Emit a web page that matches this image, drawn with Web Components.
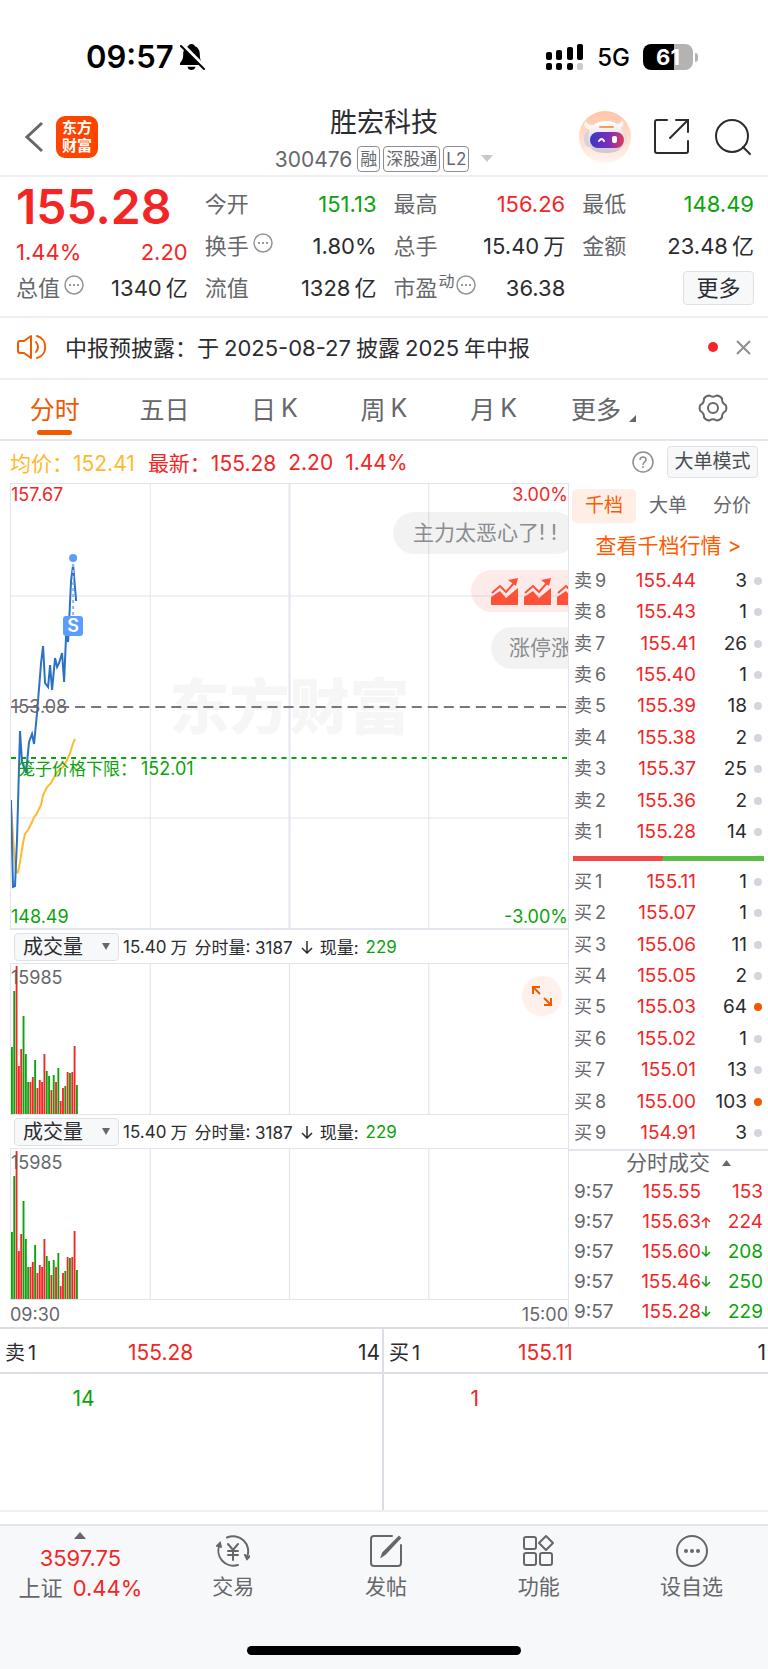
<!DOCTYPE html>
<html lang="zh-CN">
<head>
<meta charset="utf-8">
<meta name="viewport" content="width=device-width, initial-scale=1">
<title>胜宏科技 300476</title>
<style>
    body {
        margin: 0;
        background: #fff;
        color: #2b2c30;
        font-family: Inter, "Noto Sans CJK SC", sans-serif;
        font-size: 20px;
        --up: #f32626;
        --down: #0ba30b;
        --brand: #f05a00;
        --muted: #66676b;
        --line: #e3e5ec;
        --soft: #f0f0f2;
        --panel: #f7f8fa;
    }
</style>
</head>
<body>
<stock-page></stock-page>

<script>
const BASE = `
    * { box-sizing: border-box; }
    :host { display: block; }
    button, select {
        font: inherit;
        color: inherit;
        background: none;
        border: 0;
        margin: 0;
        padding: 0;
    }
    a { color: inherit; text-decoration: none; }
    svg { display: block; fill: none; }
    .up { color: var(--up); }
    .down { color: var(--down); }
`;

class BaseElement extends HTMLElement {
    constructor() {
        super();
        this.attachShadow({ mode: 'open' });
    }

    connectedCallback() {
        this.shadowRoot.innerHTML = `<style>${BASE}${this.styles()}</style>${this.template()}`;
    }

    styles() { return ''; }
    template() { return '<slot></slot>'; }
}

class StatusBar extends BaseElement {
    styles() {
        return `
            :host {
                display: flex;
                align-items: center;
                justify-content: space-between;
                padding: 40px 70px 24px 86px;
                height: 98px;
                color: #000;
            }
            .side { display: flex; align-items: center; }
            .time { font-size: 31px; font-weight: 600; line-height: 34px; margin-right: 5px; }
            .net { font-size: 24px; font-weight: 500; margin: 0 13px 0 13px; }
            .battery {
                width: 50px;
                height: 26px;
                border-radius: 8px;
                background: linear-gradient(90deg, #000 61%, #b3b3b3 61%);
                color: #fff;
                font-size: 22px;
                font-weight: 700;
                line-height: 26px;
                text-align: center;
            }
            .nub { width: 3px; height: 9px; margin-left: 2px; border-radius: 0 3px 3px 0; background: #b3b3b3; }
        `;
    }

    template() {
        return `
            <div class="side">
                <span class="time">09:57</span>
                <svg width="26" height="28" viewBox="0 0 26 28">
                    <path fill="#000" d="M12.500 1C10.500 1 9.500 2 9.200 3.200C5.500 4.500 4.200 7.500 4.200 11.500C4.200 16 2.800 18 1 20V22H23.500V20C21.800 18 20.800 16 20.800 11.500C20.800 7.500 19.500 4.500 15.800 3.200C15.500 2 14.500 1 12.500 1ZM8.500 23.800H16.500C16 26 14.500 27 12.500 27S9 26 8.500 23.800Z"/>
                    <path stroke="#fff" stroke-width="4" d="M3 1.500L26 24.500"/>
                    <path stroke="#000" stroke-width="2" stroke-linecap="round" d="M2 3L25 26"/>
                </svg>
            </div>
            <div class="side">
                <svg width="39" height="28" viewBox="0 0 39 28">
                    <g fill="#000">
                        <rect x="1" y="9" width="6" height="8" rx="2"/>
                        <rect x="11" y="7" width="6" height="10" rx="2"/>
                        <rect x="22" y="4" width="6" height="13" rx="2"/>
                        <rect x="32" y="1" width="6" height="16" rx="2"/>
                        <rect x="1" y="20" width="6" height="7" rx="2"/>
                        <rect x="11" y="20" width="6" height="7" rx="2"/>
                        <rect x="22" y="20" width="6" height="7" rx="2"/>
                    </g>
                    <rect x="32" y="20" width="6" height="7" rx="2" fill="#ccc"/>
                </svg>
                <span class="net">5G</span>
                <span class="battery">61</span>
                <span class="nub"></span>
            </div>
        `;
    }
}

class StockHeader extends BaseElement {
    styles() {
        return `
            :host {
                display: grid;
                grid-template-columns: 1fr auto 1fr;
                align-items: center;
                height: 79px;
                padding: 0 16px;
                border-bottom: 2px solid var(--soft);
            }
            .left, .right { display: flex; align-items: center; }
            .left { padding-left: 8px; }
            .right { justify-content: flex-end; }
            .logo {
                width: 42px;
                height: 42px;
                margin-left: 12px;
                padding-top: 3px;
                border-radius: 9px;
                background: #ff4400;
                color: #fff;
                font-size: 15px;
                font-weight: 700;
                line-height: 18px;
                text-align: center;
            }
            h1 { margin: 9px 0 6px; font-size: 27px; font-weight: 400; line-height: 32px; text-align: center; }
            .sub { display: flex; align-items: center; height: 30px; gap: 3px; padding-bottom: 2px; color: var(--muted); }
            .code { margin-right: 2px; font-size: 21px; }
            .tag { height: 26px; padding: 0 2px; border: 1px solid #8d8e92; border-radius: 4px; font-size: 17px; line-height: 24px; }
            .sub svg { margin-left: 9px; }
            .robot { margin-right: 21px; }
            .share { margin-right: 24px; }
        `;
    }

    template() {
        return `
            <div class="left">
                <button aria-label="返回">
                    <svg width="20" height="32" viewBox="0 0 20 32" stroke="#66676b" stroke-width="3"><path d="M18 2L3 16L18 30"/></svg>
                </button>
                <div class="logo">东方<br>财富</div>
            </div>
            <div>
                <h1>胜宏科技</h1>
                <div class="sub">
                    <span class="code">300476</span>
                    <span class="tag">融</span><span class="tag">深股通</span><span class="tag">L2</span>
                    <svg width="12" height="8" viewBox="0 0 12 8"><path fill="#c8c8ca" d="M0 0H12L6 7Z"/></svg>
                </div>
            </div>
            <div class="right">
                <button class="robot" aria-label="助手">
                    <svg width="54" height="54" viewBox="0 0 54 54">
                        <defs>
                            <linearGradient id="halo" x1="0" y1="0" x2="0" y2="1">
                                <stop offset="0" stop-color="#ffc4a6"/><stop offset="1" stop-color="#fff5ef"/>
                            </linearGradient>
                            <linearGradient id="visor">
                                <stop offset="0" stop-color="#3a36c4"/><stop offset=".55" stop-color="#7b2fb8"/><stop offset="1" stop-color="#e23a5c"/>
                            </linearGradient>
                            <linearGradient id="shell" x1="0" y1="0" x2="0" y2="1">
                                <stop offset="0" stop-color="#fff"/><stop offset="1" stop-color="#cfc6d0"/>
                            </linearGradient>
                        </defs>
                        <circle cx="27" cy="27" r="26" fill="url(#halo)"/>
                        <path fill="#fdf3f0" d="M12 20C5 18 5 13 8 11C9 15 13 15 17 15ZM40 19C46 17 47 13 44 10C43 14 39 14 36 15Z"/>
                        <ellipse cx="11" cy="29" rx="5" ry="8" fill="#d9d2da"/>
                        <ellipse cx="45" cy="29" rx="4" ry="7" fill="#e6dfe4"/>
                        <path fill="url(#shell)" d="M28 11C39 11 46 18 46 29C46 39 40 43 28 43S10 39 10 29C10 18 17 11 28 11Z"/>
                        <rect x="21" y="16" width="15" height="2" rx="1" fill="#f0a05a"/>
                        <rect x="12" y="22" width="34" height="16" rx="8" fill="url(#visor)"/>
                        <path stroke="#fff" stroke-width="2" stroke-linecap="round" d="M21 31Q24 27 26 31"/>
                        <rect x="34" y="26" width="5" height="7" rx="2" fill="#fff"/>
                    </svg>
                </button>
                <button class="share" aria-label="分享">
                    <svg width="37" height="37" viewBox="0 0 37 37" stroke="#2b2c30" stroke-width="2" stroke-linecap="round">
                        <path d="M14 2H4Q2 2 2 4V33Q2 35 4 35H33Q35 35 35 33V23M23 2H35V14M35 2L17 20"/>
                    </svg>
                </button>
                <button aria-label="搜索">
                    <svg width="38" height="38" viewBox="0 0 38 38" stroke="#2b2c30" stroke-width="2" stroke-linecap="round">
                        <circle cx="18" cy="18" r="16"/><path d="M29 29L36 36"/>
                    </svg>
                </button>
            </div>
        `;
    }
}

const MORE_ICON = `
    <svg width="20" height="20" viewBox="0 0 20 20">
        <circle cx="10" cy="10" r="9" stroke="#949599" stroke-width="1.500"/>
        <g fill="#77787c"><circle cx="6" cy="10" r="1"/><circle cx="10" cy="10" r="1"/><circle cx="14" cy="10" r="1"/></g>
    </svg>`;

// one label / value pair; attributes: label, value, unit, trend, sup, info
class QuoteItem extends BaseElement {
    styles() {
        return `
            :host { display: flex; align-items: center; justify-content: space-between; line-height: 26px; }
            .label { display: flex; color: var(--muted); }
            sup { font-size: 16px; line-height: 12px; margin-left: 1px; }
            svg { margin-left: 4px; }
            sup + svg { margin-left: 1px; }
            .unit { margin-left: 4px; }
        `;
    }

    template() {
        const attr = (name) => this.getAttribute(name) || '';
        return `
            <span class="label">${attr('label')}${attr('sup') ? `<sup>${attr('sup')}</sup>` : ''}${this.hasAttribute('info') ? MORE_ICON : ''}</span>
            <span class="${attr('trend')}">${attr('value')}${attr('unit') ? `<span class="unit">${attr('unit')}</span>` : ''}</span>
        `;
    }
}

class QuoteBoard extends BaseElement {
    styles() {
        return `
            :host {
                display: grid;
                grid-template-columns: repeat(4, 1fr);
                gap: 17px;
                padding: 6px 14px 7px 16px;
                border-bottom: 2px solid var(--soft);
                font-size: 22px;
            }
            .col { display: grid; grid-auto-rows: 42px; }
            .price { font-size: 48px; font-weight: 600; line-height: 48px; }
            .change { display: flex; justify-content: space-between; line-height: 42px; padding-bottom: 2px; }
            .more {
                justify-self: end;
                align-self: center;
                width: 71px;
                height: 34px;
                border: 1px solid #dfe1e6;
                border-radius: 4px;
                background: var(--panel);
                line-height: 30px;
            }
        `;
    }

    template() {
        return `
            <div>
                <div class="price up">155.28</div>
                <div class="change up"><span>1.44%</span><span>2.20</span></div>
                <quote-item label="总值" info value="1340" unit="亿"></quote-item>
            </div>
            <div class="col">
                <quote-item label="今开" value="151.13" trend="down"></quote-item>
                <quote-item label="换手" info value="1.80%"></quote-item>
                <quote-item label="流值" value="1328" unit="亿"></quote-item>
            </div>
            <div class="col">
                <quote-item label="最高" value="156.26" trend="up"></quote-item>
                <quote-item label="总手" value="15.40" unit="万"></quote-item>
                <quote-item label="市盈" sup="动" info value="36.38"></quote-item>
            </div>
            <div class="col">
                <quote-item label="最低" value="148.49" trend="down"></quote-item>
                <quote-item label="金额" value="23.48" unit="亿"></quote-item>
                <button class="more">更多</button>
            </div>
        `;
    }
}

class NoticeBar extends BaseElement {
    styles() {
        return `
            :host {
                display: flex;
                align-items: center;
                height: 62px;
                padding: 0 17px 2px 17px;
                border-bottom: 2px solid var(--soft);
                font-size: 22px;
            }
            .text { flex: 1; margin-left: 17px; padding-bottom: 3px; text-autospace: no-autospace; }
            ::slotted(time) { margin: 0 5px; }
            .dot { width: 10px; height: 10px; margin-right: 18px; border-radius: 50%; background: var(--up); }
        `;
    }

    template() {
        return `
            <svg width="31" height="26" viewBox="0 0 31 26" stroke="#f05a00" stroke-width="2" stroke-linecap="round" stroke-linejoin="round">
                <path d="M14 2V24L7 19H3Q1 19 1 17V9Q1 7 3 7H7ZM19 8Q23 13 19 18M20 2C31 5 31 21 20 24"/>
            </svg>
            <span class="text"><slot></slot></span>
            <span class="dot"></span>
            <button aria-label="关闭">
                <svg width="15" height="15" viewBox="0 0 15 15" stroke="#8d8e92" stroke-width="2"><path d="M1 1L14 14M14 1L1 14"/></svg>
            </button>
        `;
    }
}

class PeriodTabs extends BaseElement {
    styles() {
        return `
            :host {
                display: grid;
                grid-template-columns: repeat(7, 1fr);
                height: 61px;
                border-bottom: 2px solid var(--line);
                color: var(--muted);
                font-size: 25px;
            }
            button { display: flex; align-items: center; justify-content: center; padding-bottom: 3px; }
            .k { margin-left: 5px; }
            .active { position: relative; color: var(--brand); }
            .active::after {
                content: "";
                position: absolute;
                bottom: 4px;
                width: 35px;
                height: 5px;
                border-radius: 3px;
                background: var(--brand);
            }
            .corner { align-self: end; margin: 0 0 14px 8px; }
        `;
    }

    template() {
        return `
            <button class="active">分时</button>
            <button>五日</button>
            <button>日<span class="k">K</span></button>
            <button>周<span class="k">K</span></button>
            <button>月<span class="k">K</span></button>
            <button>更多<svg class="corner" width="7" height="7" viewBox="0 0 7 7"><path fill="#66676b" d="M7 0V7H0Z"/></svg></button>
            <button aria-label="设置">
                <svg width="30" height="30" viewBox="-15 -15 30 30" stroke="#66676b" stroke-width="2">
                    <path d="M12.600 -3.100Q14.200 0 12.600 3.100Q8.700 5 9 9.400Q7.100 12.300 3.600 12.500Q0 10 -3.600 12.500Q-7.100 12.300 -9 9.400Q-8.700 5 -12.600 3.100Q-14.200 0 -12.600 -3.100Q-8.700 -5 -9 -9.400Q-7.100 -12.300 -3.600 -12.500Q0 -10 3.600 -12.500Q7.100 -12.300 9 -9.400Q8.700 -5 12.600 -3.100Z"/>
                    <circle r="5"/>
                </svg>
            </button>
        `;
    }
}

class ChartLegend extends BaseElement {
    styles() {
        return `
            :host { display: flex; align-items: center; height: 42px; padding: 0 10px; font-size: 21px; }
            .avg { color: #ffb92e; margin-right: 13px; }
            .num { margin-left: 12px; }
            .help { margin-left: auto; }
            .mode {
                width: 91px;
                height: 32px;
                margin-left: 13px;
                border: 1px solid #dfe1e6;
                border-radius: 4px;
                background: var(--panel);
                color: #4b4c50;
                font-size: 19px;
                line-height: 30px;
                white-space: nowrap;
            }
        `;
    }

    template() {
        return `
            <span class="avg">均价：152.41</span>
            <span class="up">最新：155.28</span>
            <span class="up num">2.20</span>
            <span class="up num">1.44%</span>
            <button class="help" aria-label="说明">
                <svg width="22" height="22" viewBox="0 0 22 22" stroke="#8d8e92" stroke-width="1.500">
                    <circle cx="11" cy="11" r="10"/>
                    <path d="M8 9C8 5 14 5 14 9C14 11 11 11 11 14"/><path d="M11 15V17"/>
                </svg>
            </button>
            <button class="mode">大单模式</button>
        `;
    }
}

const PRICE_LINE = '0,316 2,403 4,402 6,356 9,247 11,278 15,289 18,258 21,250 23,260 26,229 30,179 32,162 34,199 37,203 39,181 41,206 44,174 46,183 48,179 51,169 53,198 55,151 57,158 60,96 62,81 65,117';
const AVG_LINE = '0,323 3,366 5,389 7,388 9,378 12,359 14,350 17,346 21,338 23,333 25,331 30,321 32,311 36,303 40,299 44,291 48,286 52,283 56,276 59,269 62,259 64,255';

const TREND_ICON = '<svg width="27" height="27" viewBox="0 0 27 27"><path fill="#ff5038" d="M0 27V19L9 13L15 20L27 10V27Z"/><path stroke="#ff5038" stroke-width="2" d="M1 15L9 8L15 14L23 5"/><path fill="#ff5038" d="M17 2L27 0L25 8Z"/></svg>';

class TrendChart extends BaseElement {
    styles() {
        return `
            :host {
                position: relative;
                height: 447px;
                overflow: hidden;
                border: solid var(--line);
                border-width: 1px 0 0 1px;
                font-size: 18px;
                line-height: 20px;
            }
            .plot, .watermark { position: absolute; inset: 0; width: 100%; height: 100%; }
            .watermark {
                display: grid;
                place-items: center;
                color: #f6f6f7;
                font-size: 60px;
                font-weight: 900;
            }
            .label { position: absolute; left: 0; }
            .right { left: auto; right: 0; }
            .top { top: 1px; }
            .middle { top: 213px; color: var(--muted); }
            .limit { top: 275px; left: 7px; font-size: 17px; }
            .limit span { margin-left: 4px; font-size: 18px; }
            .bottom { bottom: 3px; }
            .badge {
                position: absolute;
                left: 52px;
                top: 132px;
                width: 20px;
                height: 20px;
                border-radius: 3px;
                background: #5b9cff;
                color: #fff;
                font-weight: 600;
                text-align: center;
            }
            .bullet {
                position: absolute;
                display: flex;
                align-items: center;
                gap: 6px;
                height: 42px;
                padding: 0 20px;
                border-radius: 21px;
                background: rgba(0, 0, 0, 0.05);
                color: #8b8c90;
                font-size: 21px;
                white-space: nowrap;
            }
            .b1 { top: 28px; left: 382px; }
            .b2 { top: 86px; left: 460px; background: rgba(240, 60, 50, 0.1); }
            .b3 { top: 143px; left: 480px; padding: 0 18px; }
        `;
    }

    template() {
        return `
            <div class="watermark">东方财富</div>
            <svg class="plot" viewBox="0 0 556 446" preserveAspectRatio="none">
                <g stroke="#e3e5ec">
                    <path d="M139 0V446M417 0V446"/>
                    <path d="M278 0V446" stroke-width="2"/>
                    <path d="M0 112H556M0 334H556"/>
                    <path d="M0 445H556" stroke-width="2"/>
                </g>
                <path d="M0 223H556" stroke="#77787b" stroke-width="2" stroke-dasharray="10 6"/>
                <path d="M0 274H556" stroke="#0ba30b" stroke-width="2" stroke-dasharray="5 5"/>
                <polyline points="${AVG_LINE}" stroke="#ffb92e" stroke-width="2"/>
                <polyline points="${PRICE_LINE}" stroke="#2b72c4" stroke-width="2"/>
                <path d="M62 80V132" stroke="#8bb9ff" stroke-width="2" stroke-dasharray="3 3"/>
                <circle cx="62" cy="74" r="4" fill="#5b9cff"/>
            </svg>
            <span class="label top up">157.67</span>
            <span class="label top right up">3.00%</span>
            <span class="label middle">153.08</span>
            <span class="label limit down">笼子价格下限：<span>152.01</span></span>
            <span class="label bottom down">148.49</span>
            <span class="label bottom right down">-3.00%</span>
            <span class="badge">S</span>
            <div class="bullet b1">主力太恶心了! !</div>
            <div class="bullet b2">${TREND_ICON.repeat(3)}</div>
            <div class="bullet b3">涨停涨</div>
        `;
    }
}

// [height, rising] for every minute since the open
const VOLUMES = [
    [67, 0], [123, 0], [148, 1], [48, 1], [65, 1], [98, 0], [60, 0], [32, 0], [32, 1], [37, 1],
    [54, 0], [26, 1], [34, 1], [32, 1], [60, 1], [43, 0], [38, 0], [24, 1], [39, 0], [32, 1],
    [46, 0], [13, 1], [26, 1], [28, 0], [42, 1], [41, 0], [42, 1], [68, 1], [29, 0]
];

class VolumeChart extends BaseElement {
    styles() {
        return `
            .bar { display: flex; align-items: center; height: 33px; padding-left: 2px; font-size: 17px; white-space: nowrap; }
            .pick { position: relative; margin: 0 4px 0 2px; }
            select {
                display: block;
                appearance: none;
                width: 105px;
                height: 28px;
                padding: 0 0 0 8px;
                border: 1px solid #dfe1e6;
                border-radius: 4px;
                background: var(--panel);
                font-size: 20px;
                line-height: 24px;
            }
            .pick svg { position: absolute; right: 9px; top: 10px; pointer-events: none; }
            .unit { margin: 0 7px 0 4px; }
            .arrow { margin: 0 7px 0 8px; }
            .now { margin-left: 7px; }
            .plot { position: relative; height: 152px; border: solid var(--line); border-width: 1px 0 1px 1px; }
            .plot > svg { width: 100%; height: 100%; }
            .max { position: absolute; left: 0; top: 4px; color: var(--muted); font-size: 18px; line-height: 20px; }
            .expand {
                position: absolute;
                right: 6px;
                top: 12px;
                width: 40px;
                height: 40px;
                border-radius: 50%;
                background: #fef1eb;
                display: grid;
                place-items: center;
            }
        `;
    }

    template() {
        const bars = VOLUMES.map(([h, rise], i) =>
            `<rect x="${i * 10}" y="${150 - h}" width="8" height="${h}" fill="${rise ? '#f32626' : '#0ba30b'}"/>`).join('');
        const expand = `
            <button class="expand" aria-label="放大">
                <svg width="22" height="22" viewBox="0 0 22 22" stroke="#f05a00" stroke-width="2">
                    <path d="M2 9V2H9M2 2L9 9M20 13V20H13M20 20L13 13"/>
                </svg>
            </button>`;
        return `
            <div class="bar">
                <label class="pick">
                    <select aria-label="指标"><option>成交量</option></select>
                    <svg width="8" height="7" viewBox="0 0 8 7"><path fill="#66676b" d="M0 0H8L4 7Z"/></svg>
                </label>
                <span>15.40</span><span class="unit">万</span>
                <span>分时量: 3187</span>
                <svg class="arrow" width="12" height="14" viewBox="0 0 12 14" stroke="#2b2c30" stroke-width="1.500"><path d="M6 1V13M1 8L6 13L11 8"/></svg>
                <span>现量:</span><span class="now down">229</span>
            </div>
            <div class="plot">
                <svg viewBox="0 0 2400 150" preserveAspectRatio="none">
                    <path d="M600 0V150M1200 0V150M1800 0V150" stroke="#e3e5ec" stroke-width="5"/>
                    ${bars}
                </svg>
                <span class="max">15985</span>
                ${this.hasAttribute('expandable') ? expand : ''}
            </div>
        `;
    }
}

const SELL = [
    ['9', '155.44', 3], ['8', '155.43', 1], ['7', '155.41', 26], ['6', '155.40', 1], ['5', '155.39', 18],
    ['4', '155.38', 2], ['3', '155.37', 25], ['2', '155.36', 2], ['1', '155.28', 14]
];
const BUY = [
    ['1', '155.11', 1], ['2', '155.07', 1], ['3', '155.06', 11], ['4', '155.05', 2], ['5', '155.03', 64, 1],
    ['6', '155.02', 1], ['7', '155.01', 13], ['8', '155.00', 103, 1], ['9', '154.91', 3]
];
const TRADES = [
    ['155.55', '', 153, 'up'], ['155.63', 'up', 224, 'up'], ['155.60', 'down', 208, 'down'],
    ['155.46', 'down', 250, 'down'], ['155.28', 'down', 229, 'down']
];

class OrderBook extends BaseElement {
    styles() {
        return `
            :host { padding-top: 6px; border-left: 1px solid var(--line); font-size: 19px; }
            .tabs { display: grid; grid-template-columns: repeat(3, 1fr); margin: 0 4px 0 3px; color: var(--muted); }
            .tabs button { height: 34px; border-radius: 5px; line-height: 32px; }
            .tabs .active { background: #feeee6; color: #ff5a00; }
            .link { display: block; padding: 9px 0 5px; color: #ff5a00; font-size: 21px; line-height: 28px; text-align: center; }
            table { width: 100%; border-collapse: collapse; table-layout: fixed; }
            .book { height: 283px; }
            td, th { padding: 0; text-align: right; line-height: 24px; font-weight: 400; }
            th { padding-left: 5px; text-align: left; color: var(--muted); width: 46px; }
            .book th { font-size: 18px; }
            .book th span { margin-left: 3px; }
            .book .price { width: 81px; }
            .dot { width: 21px; }
            .dot i { display: block; width: 8px; height: 8px; margin-left: 7px; border-radius: 50%; background: #d4d6de; }
            .dot .hot { background: var(--brand); }
            .ratio { height: 5px; margin: 8px 4px 5px; background: linear-gradient(110deg, #f14848 47%, #5bbd45 47%); }
            .head {
                display: flex;
                align-items: center;
                justify-content: center;
                gap: 12px;
                width: 100%;
                height: 28px;
                padding: 0 0 3px 20px;
                border-top: 2px solid var(--line);
                color: var(--muted);
                font-size: 21px;
                line-height: 24px;
            }
            .trades { height: 150px; }
            .trades .price { width: 86px; }
            .trades .dir { width: 12px; }
            .trades td:last-child { padding-right: 5px; }
        `;
    }

    rows(side, list) {
        return list.map(([level, price, count, hot]) => `
            <tr>
                <th scope="row">${side}<span>${level}</span></th>
                <td class="price up">${price}</td>
                <td>${count}</td>
                <td class="dot"><i class="${hot ? 'hot' : ''}"></i></td>
            </tr>`).join('');
    }

    arrow(dir) {
        if (!dir) return '';
        const d = dir === 'up' ? 'M5 12V2M1 6L5 2L9 6' : 'M5 0V10M1 6L5 10L9 6';
        return `<svg width="10" height="12" viewBox="0 0 10 12" stroke="currentColor" stroke-width="1.500"><path d="${d}"/></svg>`;
    }

    template() {
        const trades = TRADES.map(([price, dir, count, trend]) => `
            <tr>
                <th scope="row">9:57</th>
                <td class="price up">${price}</td>
                <td class="dir ${dir}">${this.arrow(dir)}</td>
                <td class="${trend}">${count}</td>
            </tr>`).join('');
        return `
            <div class="tabs">
                <button class="active">千档</button><button>大单</button><button>分价</button>
            </div>
            <a class="link" href="#book">查看千档行情 &gt;</a>
            <table class="book">${this.rows('卖', SELL)}</table>
            <div class="ratio"></div>
            <table class="book">${this.rows('买', BUY)}</table>
            <button class="head">分时成交
                <svg width="9" height="6" viewBox="0 0 9 6"><path fill="#66676b" d="M0 6L4.500 0L9 6Z"/></svg>
            </button>
            <table class="trades">${trades}</table>
        `;
    }
}

class QueueSide extends BaseElement {
    styles() {
        return `
            :host { font-size: 21px; }
            .head {
                display: grid;
                grid-template-columns: 30% 23% 1fr;
                height: 45px;
                padding: 5px 2px 0 5px;
                border-bottom: 2px solid #dcdee5;
                line-height: 38px;
            }
            .name { font-size: 20px; }
            .name span { margin-left: 3px; }
            .price { text-align: center; }
            .count { text-align: right; }
            .body { height: 136px; padding-top: 10px; line-height: 30px; }
            .body div { width: 25%; padding-right: 1px; text-align: right; }
        `;
    }

    template() {
        const attr = (name) => this.getAttribute(name);
        return `
            <div class="head">
                <span class="name">${attr('side')}<span>1</span></span>
                <span class="price up">${attr('price')}</span>
                <span class="count">${attr('count')}</span>
            </div>
            <div class="body ${attr('trend')}"><div>${attr('count')}</div></div>
        `;
    }
}

class QueuePanel extends BaseElement {
    styles() {
        return `
            :host {
                display: grid;
                grid-template-columns: 1fr 1fr;
                border-top: 2px solid #dcdee5;
                border-bottom: 2px solid var(--soft);
            }
            queue-side:first-of-type { border-right: 2px solid #dcdee5; }
        `;
    }

    template() {
        return `
            <queue-side side="卖" price="155.28" count="14" trend="down"></queue-side>
            <queue-side side="买" price="155.11" count="1" trend="up"></queue-side>
        `;
    }
}

const NAV = [
    ['交易', '<path d="M11 3.500A15 15 0 0 1 31 23M22 31A15 15 0 0 1 4 10M1 12L4 9L5 13M34 22L31 25L29 21M12 10L17 16L22 10M17 16V26M12 17H22M12 21H22"/>'],
    ['发帖', '<path d="M23 2H5Q2 2 2 5V29Q2 32 5 32H29Q32 32 32 29V11"/><path d="M13 22L14 19L30 3L31 4L16 20Z" fill="#66676b"/>'],
    ['功能', '<rect x="2" y="3" width="12" height="12" rx="2"/><rect x="2" y="19" width="12" height="12" rx="2"/><rect x="18" y="19" width="12" height="12" rx="2"/><path d="M24 2L31 9L24 16L17 9Z" stroke-linejoin="round"/>'],
    ['设自选', '<circle cx="17" cy="17" r="15"/><g fill="#66676b" stroke="none"><circle cx="11" cy="17" r="2"/><circle cx="17" cy="17" r="2"/><circle cx="23" cy="17" r="2"/></g>']
];

class BottomNav extends BaseElement {
    styles() {
        return `
            :host {
                margin-top: 12px;
                padding-bottom: 14px;
                border-top: 2px solid var(--line);
                background: var(--panel);
                color: var(--muted);
            }
            nav { display: grid; grid-template-columns: repeat(5, 1fr); height: 120px; padding-left: 4px; }
            a { display: flex; flex-direction: column; align-items: center; padding-top: 6px; font-size: 21px; line-height: 30px; }
            .item svg { margin: 2px 0 4px; }
            .index { font-size: 22px; }
            .index svg { margin-bottom: 4px; }
            .index .rate { margin-left: 4px; }
            .home { width: 274px; height: 9px; margin: 0 auto; border-radius: 5px; background: #000; }
        `;
    }

    template() {
        const items = NAV.map(([label, icon]) => `
            <a class="item" href="#nav">
                <svg width="34" height="34" viewBox="0 0 34 34" stroke="#66676b" stroke-width="2" stroke-linecap="round">${icon}</svg>
                <span>${label}</span>
            </a>`).join('');
        return `
            <nav>
                <a class="index" href="#index">
                    <svg width="12" height="7" viewBox="0 0 12 7"><path fill="#66676b" d="M0 7L6 0L12 7Z"/></svg>
                    <span class="up">3597.75</span>
                    <span>上证 <span class="up rate">0.44%</span></span>
                </a>
                ${items}
            </nav>
            <div class="home"></div>
        `;
    }
}

class StockPage extends BaseElement {
    styles() {
        return `
            .market { display: grid; grid-template-columns: 1fr 200px; padding-left: 10px; }
            .axis { display: flex; justify-content: space-between; height: 27px; color: var(--muted); font-size: 18px; line-height: 30px; }
        `;
    }

    template() {
        return `
            <status-bar></status-bar>
            <stock-header></stock-header>
            <quote-board></quote-board>
            <notice-bar>中报预披露：于<time>2025-08-27</time>披露<time>2025</time>年中报</notice-bar>
            <period-tabs></period-tabs>
            <chart-legend></chart-legend>
            <div class="market">
                <div>
                    <trend-chart></trend-chart>
                    <volume-chart expandable></volume-chart>
                    <volume-chart></volume-chart>
                    <div class="axis"><span>09:30</span><span>15:00</span></div>
                </div>
                <order-book></order-book>
            </div>
            <queue-panel></queue-panel>
            <bottom-nav></bottom-nav>
        `;
    }
}

customElements.define('status-bar', StatusBar);
customElements.define('stock-header', StockHeader);
customElements.define('quote-item', QuoteItem);
customElements.define('quote-board', QuoteBoard);
customElements.define('notice-bar', NoticeBar);
customElements.define('period-tabs', PeriodTabs);
customElements.define('chart-legend', ChartLegend);
customElements.define('trend-chart', TrendChart);
customElements.define('volume-chart', VolumeChart);
customElements.define('order-book', OrderBook);
customElements.define('queue-side', QueueSide);
customElements.define('queue-panel', QueuePanel);
customElements.define('bottom-nav', BottomNav);
customElements.define('stock-page', StockPage);
</script>
</body>
</html>
